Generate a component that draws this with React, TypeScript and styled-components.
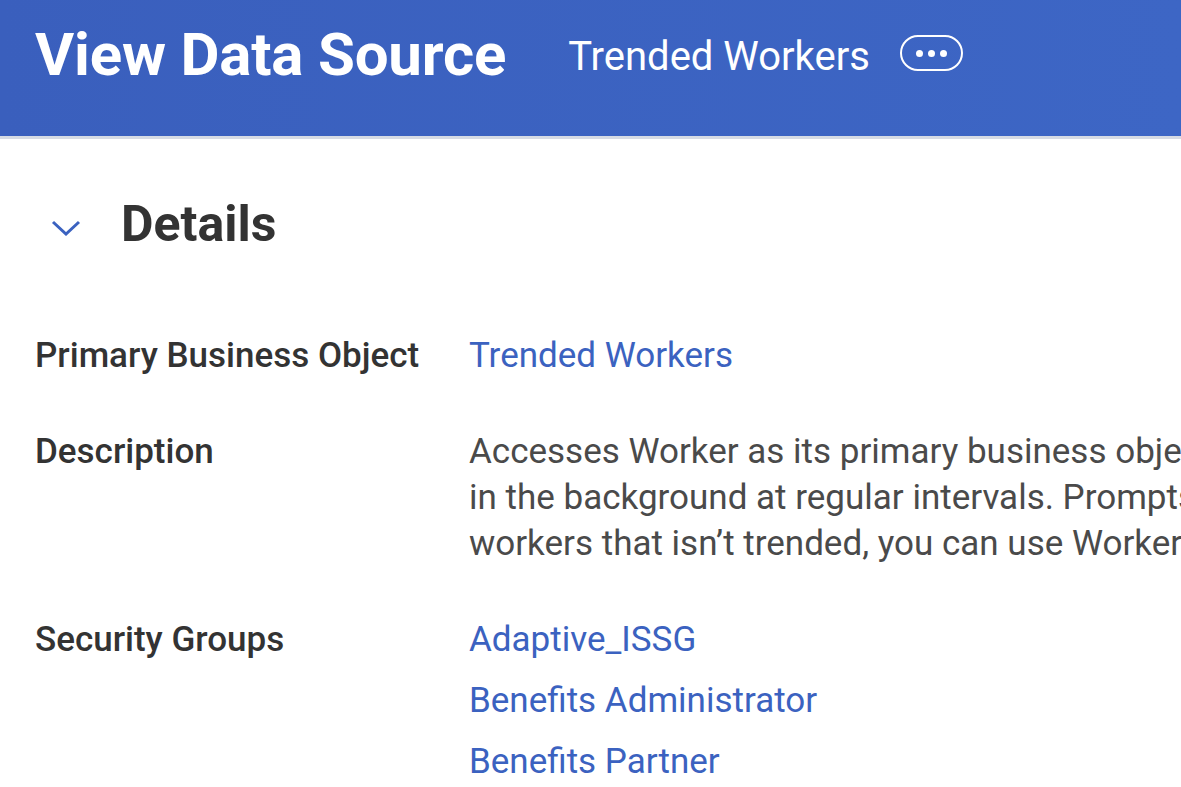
import React from 'react'
import styled, { createGlobalStyle } from 'styled-components'

const GlobalStyle = createGlobalStyle`
	html, body {
		margin: 0;
		padding: 0;
		background: #ffffff;
		font-family: Roboto, 'Liberation Sans', sans-serif;
		overflow: hidden;
	}
`

const Header = styled.header`
	height: 139px;
	box-sizing: border-box;
	display: flex;
	align-items: flex-start;
	padding: 23px 0 0 35px;
	background: linear-gradient(90deg, #3a5fbd, #3d66c5);
	border-bottom: 3px solid #d6dbe4;
`

const PageTitle = styled.h1`
	margin: 0;
	font-size: 60px;
	line-height: 64px;
	font-weight: 700;
	color: #ffffff;
	letter-spacing: -0.2px;
	white-space: nowrap;
`

const Subject = styled.span`
	margin: 6px 0 0 62px;
	font-size: 40px;
	line-height: 56px;
	font-weight: 400;
	color: #ffffff;
	white-space: nowrap;
`

const MoreButton = styled.button`
	margin: 12px 0 0 30px;
	width: 63px;
	height: 36px;
	box-sizing: border-box;
	border: 2px solid #ffffff;
	border-radius: 18px;
	background: transparent;
	display: flex;
	align-items: center;
	justify-content: center;
	gap: 5px;
	padding: 0;
`

const Dot = styled.span`
	width: 7px;
	height: 7px;
	border-radius: 50%;
	background: #ffffff;
`

const Section = styled.section`
	padding: 55px 0 0 35px;
`

const SectionHead = styled.div`
	display: flex;
	align-items: center;
	gap: 40px;
	height: 60px;
`

const Chevron = styled.svg`
	width: 30px;
	height: 16px;
	margin-left: 16px;
	margin-top: 8px;
`

const SectionTitle = styled.h2`
	margin: 0;
	font-size: 50px;
	font-weight: 700;
	color: #333333;
`

const Fields = styled.dl`
	margin: 79px 0 0;
	display: grid;
	grid-template-columns: 434px 1fr;
	row-gap: 50px;
`

const Label = styled.dt`
	margin: 0;
	font-size: 35px;
	line-height: 46px;
	font-weight: 500;
	color: #333333;
	white-space: nowrap;
`

const Value = styled.dd`
	margin: 0;
	font-size: 35px;
	line-height: 46px;
	color: #4a4a4a;
	white-space: nowrap;
	overflow: hidden;
`

const LinkList = styled.div`
	display: flex;
	flex-direction: column;
	gap: 15px;
`

const Link = styled.a`
	color: #3b62c0;
	text-decoration: none;
	cursor: pointer;
`

const groups = ['Adaptive_ISSG', 'Benefits Administrator', 'Benefits Partner']

export default function App() {
	return (
		<>
			<GlobalStyle />
			<Header>
				<PageTitle>View Data Source</PageTitle>
				<Subject>Trended Workers</Subject>
				<MoreButton aria-label='More actions'>
					<Dot />
					<Dot />
					<Dot />
				</MoreButton>
			</Header>
			<Section>
				<SectionHead>
					<Chevron viewBox='0 0 30 16' fill='none'>
						<path d='M2 2 L15 14 L28 2' stroke='#3b62c0' strokeWidth='3' />
					</Chevron>
					<SectionTitle>Details</SectionTitle>
				</SectionHead>
				<Fields>
					<Label>Primary Business Object</Label>
					<Value>
						<Link>Trended Workers</Link>
					</Value>
					<Label>Description</Label>
					<Value>
						Accesses Worker as its primary business object
						<br />
						in the background at regular intervals. Prompts
						<br />
						workers that isn’t trended, you can use Workers
					</Value>
					<Label>Security Groups</Label>
					<Value>
						<LinkList>
							{groups.map(g => (
								<Link key={g}>{g}</Link>
							))}
						</LinkList>
					</Value>
				</Fields>
			</Section>
		</>
	)
}
